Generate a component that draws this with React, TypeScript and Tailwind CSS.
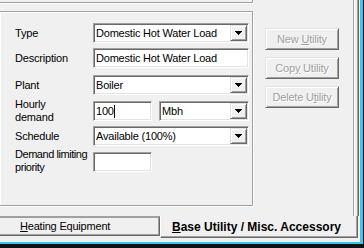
import React from 'react';

const sunken =
  'bg-white border border-t-[#a0a0a0] border-l-[#a0a0a0] border-r-white border-b-white shadow-[inset_1px_1px_0_#696969,inset_-1px_-1px_0_#e3e3e3]';
const raised =
  'bg-[#f0f0f0] border border-t-[#e3e3e3] border-l-[#e3e3e3] border-r-[#696969] border-b-[#696969] shadow-[inset_1px_1px_0_#fff,inset_-1px_-1px_0_#a0a0a0]';

const Arrow = () => (
  <svg width="7" height="4" viewBox="0 0 7 4" shapeRendering="crispEdges">
    <path d="M0 0h7v1H0zM1 1h5v1H1zM2 2h3v1H2zM3 3h1v1H3z" fill="#000" />
  </svg>
);

const Combo: React.FC<{ value: string; width: string }> = ({ value, width }) => (
  <div className={`${sunken} ${width} h-[20px] flex items-center pl-[2px] pr-[1px]`}>
    <span className="flex-1 whitespace-nowrap overflow-hidden leading-[13px]">{value}</span>
    <div className={`${raised} w-[17px] h-[16px] flex items-center justify-center`}>
      <Arrow />
    </div>
  </div>
);

const Field: React.FC<{ value?: string; width: string; caret?: boolean }> = ({ value, width, caret }) => (
  <div className={`${sunken} ${width} h-[20px] flex items-center pl-[2px]`}>
    <span className="whitespace-nowrap leading-[13px]">{value}</span>
    {caret && <span className="w-px h-[13px] bg-black" />}
  </div>
);

const DisabledButton: React.FC<{ before: string; key_: string; after: string }> = ({ before, key_, after }) => (
  <div className={`${raised} w-[74px] h-[22px] flex items-center justify-center`}>
    <span className="text-[#a0a0a0] [text-shadow:1px_1px_0_#fff] whitespace-nowrap">
      {before}
      <span className="underline underline-offset-[1px]">{key_}</span>
      {after}
    </span>
  </div>
);

const Label: React.FC<{ children: React.ReactNode; shift?: string }> = ({ children, shift = '' }) => (
  <div className="w-[78px] h-[20px] flex items-center">
    <div className={`whitespace-nowrap leading-[13px] ${shift}`}>{children}</div>
  </div>
);

export default function App() {
  return (
    <div className="w-[364px] h-[248px] bg-[#101010] overflow-hidden font-['Liberation_Sans',Arial,sans-serif] text-[11px] tracking-[-0.2px] text-black">
      <div className="w-[363px] h-[244px] bg-[#f0f0f0] border-r-[3px] border-b-2 border-[#3ac6f2] flex flex-col">
        {/* tab page */}
        <div className="h-[216px] flex">
          <div className="w-[353px] flex flex-col">
            <div className="h-[11px]">
              <div className="ml-[-1px] w-[254px] h-[3px] border-r border-b border-[#a0a0a0] shadow-[1px_1px_0_#fff]" />
            </div>
            <div className="flex">
              <div className="ml-[-1px] w-[254px] h-[195px] border border-[#a0a0a0] shadow-[inset_1px_1px_0_#fff,1px_1px_0_#fff] pl-[15px] pt-[11px] flex flex-col">
                <div className="flex">
                  <Label>Type</Label>
                  <Combo value="Domestic Hot Water Load" width="w-[156px]" />
                </div>
                <div className="flex mt-[5px]">
                  <Label>Description</Label>
                  <Field value="Domestic Hot Water Load" width="w-[156px]" />
                </div>
                <div className="flex mt-[7px]">
                  <Label>Plant</Label>
                  <Combo value="Boiler" width="w-[156px]" />
                </div>
                <div className="flex mt-[6px]">
                  <Label shift="mt-[-1px]">
                    Hourly
                    <br />
                    demand
                  </Label>
                  <Field value="100" width="w-[59px]" caret />
                  <div className="ml-[7px]">
                    <Combo value="Mbh" width="w-[90px]" />
                  </div>
                </div>
                <div className="flex mt-[5px]">
                  <Label>Schedule</Label>
                  <Combo value="Available (100%)" width="w-[156px]" />
                </div>
                <div className="flex mt-[6px]">
                  <Label shift="mt-[-3px] tracking-[-0.45px]">
                    Demand limiting
                    <br />
                    priority
                  </Label>
                  <Field width="w-[59px]" />
                </div>
              </div>
              <div className="ml-[12px] pt-[17px] flex flex-col gap-[7px]">
                <DisabledButton before="New " key_="U" after="tility" />
                <DisabledButton before="Cop" key_="y" after=" Utility" />
                <DisabledButton before="Delete U" key_="t" after="ility" />
              </div>
            </div>
          </div>
          <div className="w-px bg-[#a0a0a0]" />
          <div className="w-px bg-white" />
          <div className="w-[2px]" />
          <div className="w-px bg-[#a0a0a0]" />
          <div className="w-px bg-[#696969]" />
        </div>
        {/* tabs at bottom */}
        <div className="flex">
          <div className="w-[160px] h-[20px] border-t-2 border-t-[#a0a0a0] border-r border-r-[#696969] border-b border-b-[#696969] shadow-[inset_-1px_-1px_0_#a0a0a0] flex items-center pl-[20px]">
            <span className="whitespace-nowrap">
              <span className="underline underline-offset-[1px]">H</span>eating Equipment
            </span>
          </div>
          <div className="w-[198px] h-[22px] border-l border-l-white border-r border-r-[#696969] border-b border-b-[#696969] shadow-[inset_-1px_-1px_0_#a0a0a0] flex items-center pl-[11px]">
            <span className="whitespace-nowrap font-bold text-[12px] tracking-normal">
              <span className="underline underline-offset-[1px]">B</span>ase Utility / Misc. Accessory
            </span>
          </div>
        </div>
      </div>
    </div>
  );
}
